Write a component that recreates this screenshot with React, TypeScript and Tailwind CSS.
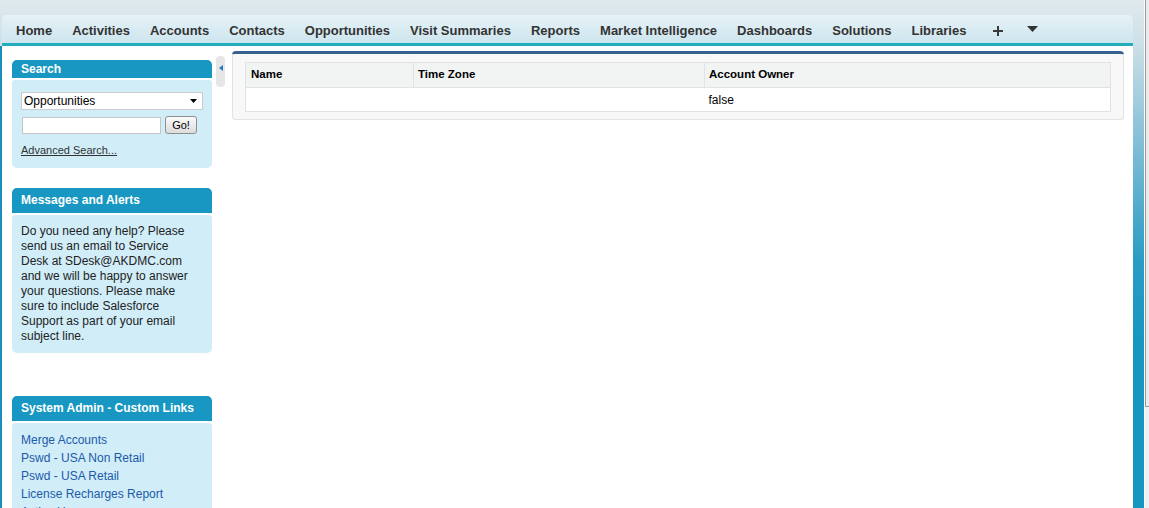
const TABS = [
  "Home",
  "Activities",
  "Accounts",
  "Contacts",
  "Opportunities",
  "Visit Summaries",
  "Reports",
  "Market Intelligence",
  "Dashboards",
  "Solutions",
  "Libraries",
];

const LINKS = [
  "Merge Accounts",
  "Pswd - USA Non Retail",
  "Pswd - USA Retail",
  "License Recharges Report",
  "Active Users",
];

export default function App() {
  return (
    <div className="flex h-[508px] w-full overflow-hidden font-['Liberation_Sans',Arial,sans-serif]">
      <div className="flex min-w-0 flex-1 flex-col bg-[linear-gradient(to_bottom,#dfe9ed_0px,#cfe1e8_40px,#7dbcd6_150px,#2a9cc4_260px,#1797c0_340px)] pt-[15px] pr-[11px]">
        <TabBar />
        <div className="flex min-h-0 flex-1 overflow-hidden border-l-2 border-[#1a8db8] bg-white">
          <Sidebar />
          <CollapseHandle />
          <Main />
        </div>
      </div>
      <Scrollbar />
    </div>
  );
}

function TabBar() {
  return (
    <div className="ml-[2px] flex h-[31px] shrink-0 items-center rounded-t-[5px] border-b-[3px] border-[#21adb9] bg-[linear-gradient(to_bottom,#e6f2f7,#cde5ee)] pl-[4px] pt-[3px]">
      {TABS.map((t) => (
        <span key={t} className="px-[10px] text-[13px] font-bold text-[#333]">
          {t}
        </span>
      ))}
      <span className="ml-[9px] px-[8px]">
        <svg width="10" height="10" viewBox="0 0 10 10">
          <path d="M4 0h2v4h4v2H6v4H4V6H0V4h4z" fill="#3a3a3a" />
        </svg>
      </span>
      <span className="ml-[10px] px-[6px]">
        <svg width="11" height="6" viewBox="0 0 11 6" className="mb-[3px]">
          <path d="M0 0h11L5.5 6z" fill="#333" />
        </svg>
      </span>
    </div>
  );
}

function Header({ children }: { children: React.ReactNode }) {
  return (
    <div className="flex h-[25px] items-center rounded-t-[5px] bg-[#1797c1] px-[9px] text-[12px] font-bold text-white">
      {children}
    </div>
  );
}

function Sidebar() {
  return (
    <div className="ml-[10px] flex w-[200px] shrink-0 flex-col pt-[14px]">
      {/* Search */}
      <Header>Search</Header>
      <div className="mt-[2px] rounded-b-[5px] rounded-t-[3px] bg-[#d0edf8] px-[9px] pt-[12px] pb-[9px]">
        <div className="flex h-[18px] items-center justify-between border border-[#ccc] bg-white pl-[2px] pr-[5px] text-[12px] text-black">
          <span>Opportunities</span>
          <svg width="7" height="4" viewBox="0 0 7 4">
            <path d="M0 0h7L3.5 4z" fill="#000" />
          </svg>
        </div>
        <div className="mt-[6px] flex items-center gap-[4px]">
          <div className="ml-[1px] h-[17px] w-[139px] border border-[#c6c6c6] bg-white" />
          <div className="flex h-[18px] w-[32px] items-center justify-center rounded-[3px] border border-[#8f8f8f] bg-[linear-gradient(to_bottom,#fafafa,#dcdcdc)] text-[11px] text-black">
            Go!
          </div>
        </div>
        <div className="mt-[8px] text-[11px] text-[#333] underline">Advanced Search...</div>
      </div>

      {/* Messages */}
      <div className="mt-[20px]">
        <Header>Messages and Alerts</Header>
        <div className="mt-[2px] rounded-b-[5px] rounded-t-[3px] bg-[#d0edf8] pl-[9px] pr-[19px] pt-[9px] pb-[9px] text-[12px] leading-[15px] text-[#222]">
          Do you need any help? Please send us an email to Service Desk at SDesk@AKDMC.com and
          we will be happy to answer your questions. Please make sure to include Salesforce Support
          as part of your email subject line.
        </div>
      </div>

      {/* Custom links */}
      <div className="mt-[43px]">
        <Header>System Admin - Custom Links</Header>
        <div className="mt-[2px] rounded-t-[3px] bg-[#d0edf8] px-[9px] pt-[8px] pb-[9px] text-[12px] leading-[18px] text-[#1d5aa8]">
          {LINKS.map((l) => (
            <div key={l}>{l}</div>
          ))}
        </div>
      </div>
    </div>
  );
}

function CollapseHandle() {
  return (
    <div className="ml-[4px] mt-[10px] flex h-[31px] w-[9px] shrink-0 items-center justify-center rounded-[4px] bg-[#e6e6e6]">
      <svg width="4" height="6" viewBox="0 0 4 6" className="mb-[8px]">
        <path d="M4 0v6L0 3z" fill="#2a78c0" />
      </svg>
    </div>
  );
}

function Main() {
  return (
    <div className="ml-[7px] mr-[9px] mt-[5px] flex-1 self-start">
      <div className="rounded-[4px] border-t-[3px] border-[#36628e] bg-[#f8f8f8]">
        <div className="rounded-b-[4px] border-x border-b border-[#e3e3e3] px-[12px] pt-[8px] pb-[7px]">
          <table className="w-full border-collapse border border-[#e0e3e5] text-left">
            <thead>
              <tr className="h-[25px] bg-[#f2f3f3] text-[11.5px] font-bold text-black">
                <th className="w-[168px] border-b border-r border-[#e0e3e5] pl-[5px] font-bold">Name</th>
                <th className="w-[291px] border-b border-r border-[#e0e3e5] pl-[4px] font-bold">Time Zone</th>
                <th className="border-b border-[#e0e3e5] pl-[4px] font-bold">Account Owner</th>
              </tr>
            </thead>
            <tbody>
              <tr className="h-[24px] bg-white text-[12px] text-black">
                <td />
                <td />
                <td className="pl-[4px]">false</td>
              </tr>
            </tbody>
          </table>
        </div>
      </div>
    </div>
  );
}

function Scrollbar() {
  return (
    <div className="flex w-[5px] shrink-0 flex-col border-l border-[#fbfbfb] bg-[#f0f0f0]">
      <div className="h-[407px] border-b border-l border-[#9a9a9a] bg-[#ebebeb]" />
    </div>
  );
}
